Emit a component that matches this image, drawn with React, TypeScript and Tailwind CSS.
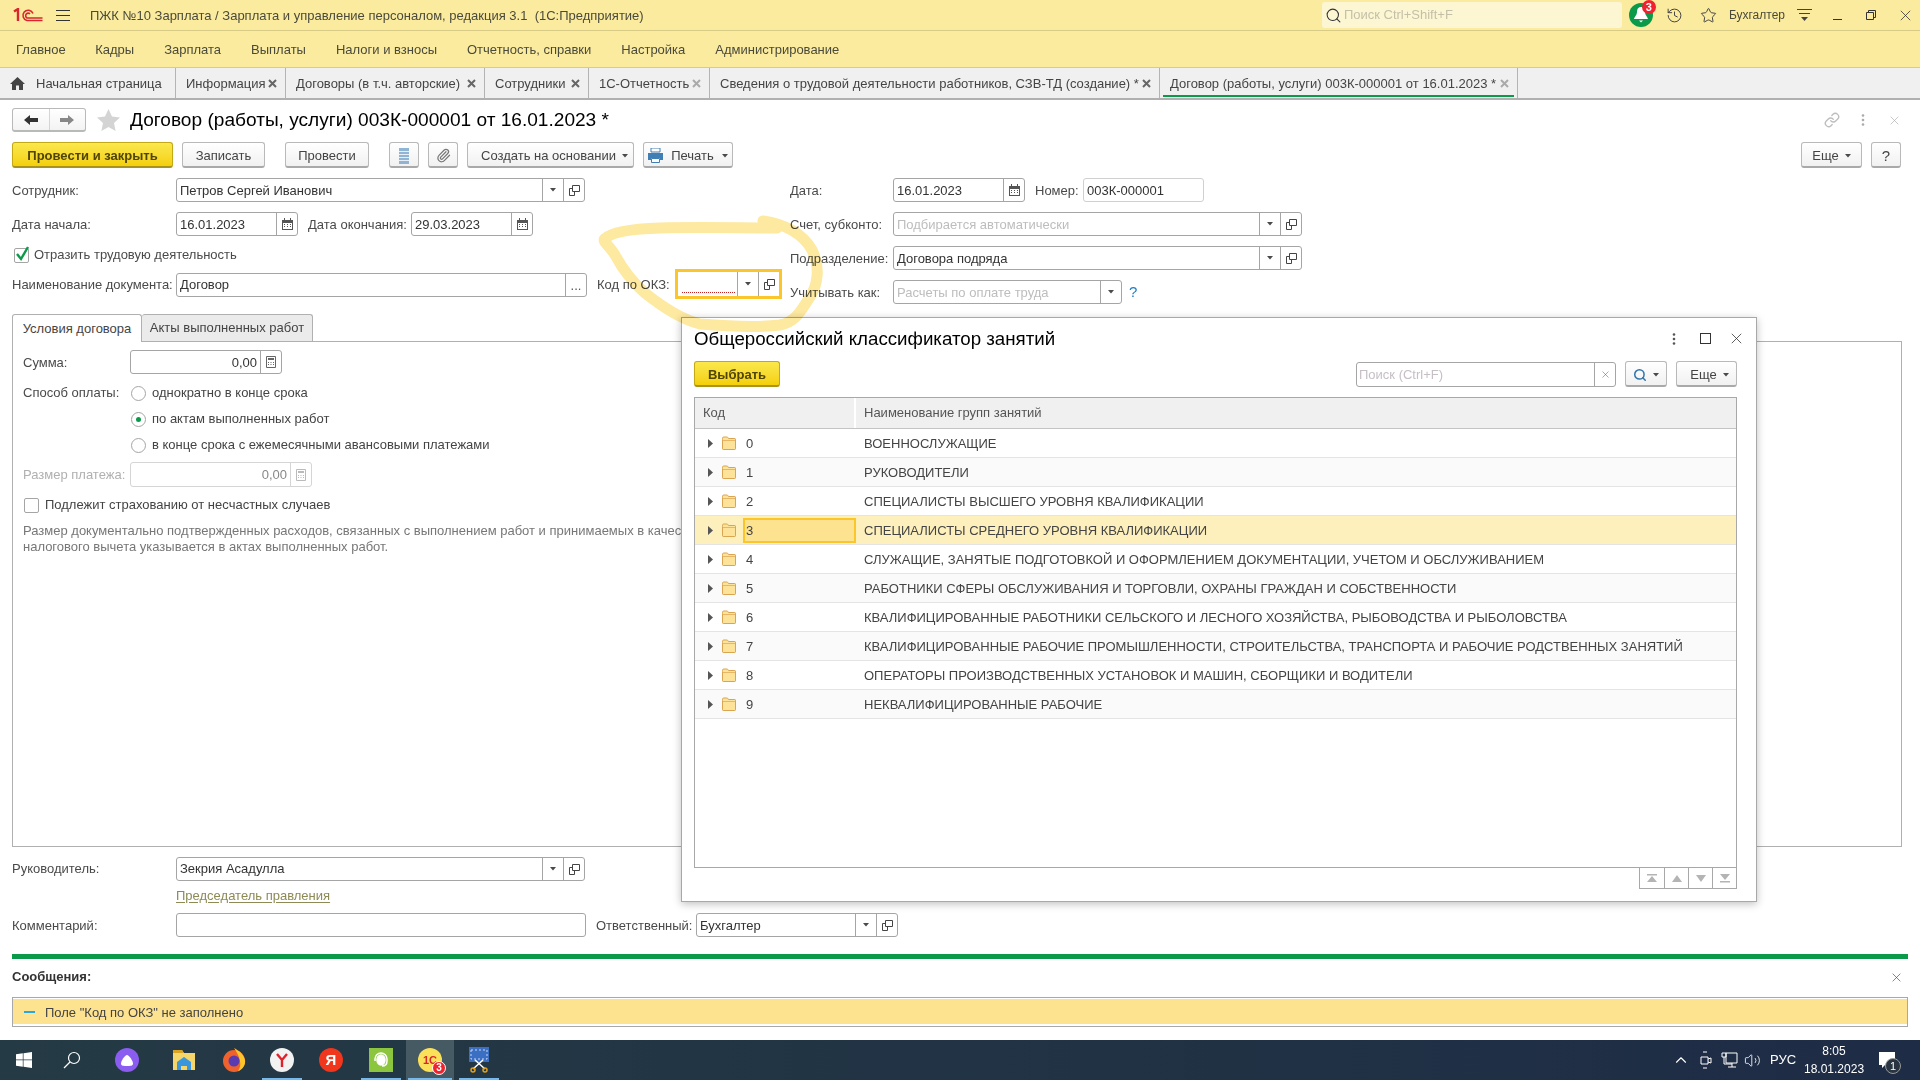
import React from "react";
import { ChevronUp, History, Link as LinkIcon, Paperclip, Search, Star, Volume2 } from "lucide-react";

const Tri = ({ c = "#4a4a4a" }: { c?: string }) => (
  <svg width="6" height="4" viewBox="0 0 6 4" className="shrink-0"><path d="M0 0h6L3 3.500z" fill={c} /></svg>
);
const OpenIco = () => (
  <svg width="11" height="11" viewBox="0 0 11 11" fill="none" stroke="#444" strokeWidth="1"><path d="M3.5 .5h7v6h-7z" /><path d="M3.5 3.5h-3v7h5v-4" /></svg>
);
const CalIco = ({ c = "#555" }: { c?: string }) => (
  <svg width="11" height="12" viewBox="0 0 11 12"><path d="M0 2h11v10H0z" fill={c} /><path d="M1 5h9v6H1z" fill="#fff" /><path d="M2 0h1v3H2zM8 0h1v3H8zM2 6h1v1H2zM5 6h1v1H5zM8 6h1v1H8zM2 8h1v1H2zM5 8h1v1H5zM8 8h1v1H8z" fill={c} /></svg>
);
const CalcIco = ({ c = "#666" }: { c?: string }) => (
  <svg width="10" height="12" viewBox="0 0 10 12"><path d="M.5 .5h9v11h-9z" fill="#fff" stroke={c} /><path d="M2 2h6v2H2zM2 6h1v1H2zM4.500 6h1v1h-1zM7 6h1v1H7zM2 8h1v1H2zM4.500 8h1v1h-1zM7 8h1v1H7z" fill={c} /></svg>
);
const TabX = ({ c = "#666" }: { c?: string }) => (
  <svg width="9" height="9" viewBox="0 0 9 9" stroke={c} strokeWidth="2" className="shrink-0"><path d="M1 1l7 7M8 1L1 8" /></svg>
);
const ThinX = ({ s = 14, c = "#444" }: { s?: number; c?: string }) => (
  <svg width={s} height={s} viewBox="0 0 14 14" stroke={c} strokeWidth="1" fill="none"><path d="M1 1l12 12M13 1L1 13" /></svg>
);

function Seg({ children, w = 21 }: { children: React.ReactNode; w?: number }) {
  return (
    <div style={{ width: w }} className="h-full border-l border-[#a5a5a5] flex items-center justify-center shrink-0">{children}</div>
  );
}

function Field({ w, text, ph, right, arrow, open, cal, calc, dots, dim, raised }: { w: number; text?: string; ph?: string; right?: boolean; arrow?: boolean; open?: boolean; cal?: boolean; calc?: boolean; dots?: boolean; dim?: boolean; raised?: boolean }) {
  return (
    <div style={{ width: w }} className={`h-6 flex items-center rounded-[3px] border bg-white shrink-0 ${dim ? "border-[#d0d0d0]" : "border-[#a5a5a5]"}`}>
      <div className={`flex-1 min-w-0 px-[3px] whitespace-nowrap overflow-hidden ${raised ? "" : "pt-px"} ${right ? "text-right" : ""} ${ph ? "text-[#bdbdbd]" : "text-[#333]"}`}>{text ?? ph}</div>
      {arrow && <Seg><Tri /></Seg>}
      {open && <Seg><OpenIco /></Seg>}
      {cal && <Seg><CalIco /></Seg>}
      {calc && <Seg><CalcIco /></Seg>}
      {dots && <Seg><span className="text-[#555] leading-none">...</span></Seg>}
    </div>
  );
}

function Btn({ w, children, cls = "" }: { w: number; children: React.ReactNode; cls?: string }) {
  return (
    <div style={{ width: w }} className={`h-[26px] shrink-0 flex items-center justify-center gap-[6px] rounded-[3px] border border-[#b9b9b9] border-b-2 border-b-[#a9a9a9] bg-linear-to-b from-white to-[#f1f1f1] text-[#444] pt-[2px] ${cls}`}>{children}</div>
  );
}
function YBtn({ w, children }: { w: number; children: React.ReactNode }) {
  return (
    <div style={{ width: w }} className="h-[26px] shrink-0 flex items-center justify-center rounded-[3px] border border-[#c4a917] border-b-2 border-b-[#a89320] bg-linear-to-b from-[#fbe84a] to-[#f4d000] text-[#4f4500] font-bold pt-[2px]">{children}</div>
  );
}

function Tab({ w, label, x, active, xc }: { w: number; label: string; x?: boolean; active?: boolean; xc?: string }) {
  return (
    <div style={{ width: w }} className="relative h-full shrink-0 flex items-center justify-between pl-[10px] pr-[8px] border-r border-[#b4b4b4] text-[#444] whitespace-nowrap">
      <span className="pt-px">{label}</span>
      {x && <TabX c={xc} />}
      {active && <div className="absolute left-[3px] right-[3px] bottom-[1px] h-[2px] bg-[#0a9a49]" />}
    </div>
  );
}

const Label = ({ w, children, cls = "" }: { w: number; children: React.ReactNode; cls?: string }) => (
  <div style={{ width: w }} className={`shrink-0 text-[#4a4a4a] whitespace-nowrap pt-px ${cls}`}>{children}</div>
);

const Radio = ({ on }: { on?: boolean }) => (
  <div className="w-[15px] h-[15px] rounded-full border border-[#a5a5a5] bg-white flex items-center justify-center shrink-0">
    {on && <div className="w-[5px] h-[5px] rounded-full bg-[#0a9a49]" />}
  </div>
);

const Folder = () => (
  <svg width="14" height="14" viewBox="0 0 14 14"><path d="M.5 3.5V2.2C.5 1.5 1 1 1.7 1h3.2c.5 0 .9.3 1.1.7l.4.8h6.4c.4 0 .7.3.7.7v9.6c0 .4-.3.7-.7.7H1.2c-.4 0-.7-.3-.7-.7z" fill="#fde29a" stroke="#d9a550" /><path d="M1 4.5h12" stroke="#e6b766" /></svg>
);

const rows: [string, string][] = [
  ["0", "ВОЕННОСЛУЖАЩИЕ"],
  ["1", "РУКОВОДИТЕЛИ"],
  ["2", "СПЕЦИАЛИСТЫ ВЫСШЕГО УРОВНЯ КВАЛИФИКАЦИИ"],
  ["3", "СПЕЦИАЛИСТЫ СРЕДНЕГО УРОВНЯ КВАЛИФИКАЦИИ"],
  ["4", "СЛУЖАЩИЕ, ЗАНЯТЫЕ ПОДГОТОВКОЙ И ОФОРМЛЕНИЕМ ДОКУМЕНТАЦИИ, УЧЕТОМ И ОБСЛУЖИВАНИЕМ"],
  ["5", "РАБОТНИКИ СФЕРЫ ОБСЛУЖИВАНИЯ И ТОРГОВЛИ, ОХРАНЫ ГРАЖДАН И СОБСТВЕННОСТИ"],
  ["6", "КВАЛИФИЦИРОВАННЫЕ РАБОТНИКИ СЕЛЬСКОГО И ЛЕСНОГО ХОЗЯЙСТВА, РЫБОВОДСТВА И РЫБОЛОВСТВА"],
  ["7", "КВАЛИФИЦИРОВАННЫЕ РАБОЧИЕ ПРОМЫШЛЕННОСТИ, СТРОИТЕЛЬСТВА, ТРАНСПОРТА И РАБОЧИЕ РОДСТВЕННЫХ ЗАНЯТИЙ"],
  ["8", "ОПЕРАТОРЫ ПРОИЗВОДСТВЕННЫХ УСТАНОВОК И МАШИН, СБОРЩИКИ И ВОДИТЕЛИ"],
  ["9", "НЕКВАЛИФИЦИРОВАННЫЕ РАБОЧИЕ"],
];

function TB({ w, line, lineW = 40, hl, children }: { w: number; line?: boolean; lineW?: number; hl?: boolean; children: React.ReactNode }) {
  return (
    <div style={{ width: w }} className={`relative h-full shrink-0 flex items-center justify-center ${hl ? "bg-[#465a63]" : ""}`}>
      {children}
      {line && <div style={{ width: lineW }} className="absolute bottom-0 left-1/2 -translate-x-1/2 h-[2px] bg-[#76b9ed]" />}
    </div>
  );
}

function Dialog() {
  return (
    <div className="absolute left-[681px] top-[317px] w-[1076px] h-[585px] border border-[#a8a8a8] bg-white shadow-[0_2px_8px_rgba(0,0,0,0.25)] pl-[12px] pr-[19px]">
      <div className="h-[43px] pb-[2px] flex items-center justify-between">
        <div className="text-[18.7px] text-black whitespace-nowrap">Общероссийский классификатор занятий</div>
        <div className="flex items-center mr-[-5px]">
          <svg width="4" height="12" viewBox="0 0 4 12" fill="#555"><circle cx="2" cy="1.5" r="1.3" /><circle cx="2" cy="6" r="1.3" /><circle cx="2" cy="10.5" r="1.3" /></svg>
          <div className="ml-[24px] w-[9px] h-[9px] box-content border border-[#333]" />
          <div className="ml-[20px]"><ThinX s={11} c="#333" /></div>
        </div>
      </div>
      <div className="h-[26px] flex items-center">
        <YBtn w={86}>Выбрать</YBtn>
        <div className="flex-1" />
        <div className="w-[260px] h-[25px] flex items-center rounded-[3px] border border-[#a5a5a5] bg-white">
          <div className="flex-1 px-[2px] pt-px text-[#c6bfc6]">Поиск (Ctrl+F)</div>
          <Seg><ThinX s={7} c="#555" /></Seg>
        </div>
        <Btn w={42} cls="ml-[9px]"><Search size={14} color="#2f75ad" strokeWidth={2.6} /><Tri /></Btn>
        <Btn w={61} cls="ml-[9px]"><span className="ml-[6px]">Еще</span><Tri /></Btn>
      </div>
      <div className="mt-[10px] h-[471px] border border-[#a8a8a8]">
        <div className="h-[31px] flex bg-[#f0f0f0] border-b border-[#c4c4c4] text-[#555]">
          <div className="w-[161px] h-full flex items-center pl-[8px] border-r-2 border-white">Код</div>
          <div className="flex-1 flex items-center pl-[8px]">Наименование групп занятий</div>
        </div>
        {rows.map(([c, t], i) => {
          const sel = i === 3;
          return (
            <div key={c} className={`h-[29px] flex items-center border-b border-[#e4e4e4] text-[#444] ${sel ? "bg-[#fdf0bd]" : i % 2 ? "bg-[#fafafa]" : "bg-white"}`}>
              <div className="w-[48px] h-full flex items-center pl-[13px] shrink-0">
                <svg width="5" height="9" viewBox="0 0 5 9"><path d="M0 0l5 4.5L0 9z" fill="#555" /></svg>
                <div className="ml-[9px] flex"><Folder /></div>
              </div>
              <div className={`w-[113px] h-[25px] shrink-0 flex items-center pl-[1px] pt-px border-2 ${sel ? "border-[#fbc52c] bg-[#fde28f]" : "border-transparent"}`}>{c}</div>
              <div className="pl-[8px] pt-px whitespace-nowrap">{t}</div>
            </div>
          );
        })}
      </div>
      <div className="flex justify-end -mt-px">
        <div className="flex border border-[#a8a8a8] h-[22px]">
          {["M1 1h10v1.5H1zM6 3l5 6H1z", "M6 2l5 7H1z", "M1 2h10L6 9z", "M1 1h10L6 7zM1 8h10v1.5H1z"].map((d, i) => (
            <div key={i} className={`w-[24px] flex items-center justify-center ${i ? "border-l border-[#a8a8a8]" : ""}`}>
              <svg width="12" height="10" viewBox="0 0 12 10"><path d={d} fill="#b4b4b4" /></svg>
            </div>
          ))}
        </div>
      </div>
    </div>
  );
}

export default function App() {
  return (
    <div className="relative w-[1920px] h-[1080px] overflow-hidden bg-white flex flex-col text-[13px] leading-4 text-[#333] [font-family:'Liberation_Sans',Arial,sans-serif]">
      {/* Title bar */}
      <div className="h-[31px] shrink-0 bg-[#fbeb9f] border-b border-[#d8cb85] flex items-center text-[#4a4a3a]">
        <svg width="30" height="14" viewBox="0 0 30 14" className="ml-[13px] shrink-0" fill="none" stroke="#d8262c">
          <path d="M1 3.5L5 1v12" strokeWidth="2.4" />
          <path d="M20 5.5A5.2 5.2 0 1 0 14 12.5H29.5" strokeWidth="1.6" />
          <path d="M17 5.8A2.6 2.6 0 1 0 14 10H29.5" strokeWidth="1.6" />
        </svg>
        <div className="ml-[13px] w-[14px] h-[11px] border-y border-[#333] relative shrink-0"><div className="absolute left-0 right-0 top-[4px] h-px bg-[#333]" /></div>
        <div className="ml-[20px] pt-px whitespace-nowrap">ПЖК №10 Зарплата / Зарплата и управление персоналом, редакция 3.1&nbsp; (1С:Предприятие)</div>
        <div className="flex-1" />
        <div className="w-[300px] h-[26px] rounded-[3px] bg-[#fdf6d3] flex items-center pl-[3px] text-[#c4c0a8]">
          <Search size={17} color="#333" strokeWidth={1.5} />
          <span className="ml-[2px]">Поиск Ctrl+Shift+F</span>
        </div>
        <div className="relative ml-[7px] w-[24px] h-[24px] rounded-full bg-[#0a9a49] flex items-center justify-center">
          <svg width="14" height="16" viewBox="0 0 14 16" fill="#fff"><path d="M7 0c3 0 4 2.5 4 5 0 3 3 5.5 3 7H0c0-1.500 3-4 3-7 0-2.500 1-5 4-5zM5 13.500h4L7 15.500z" /></svg>
          <div className="absolute -top-[3px] -right-[3px] w-[14px] h-[14px] rounded-full bg-[#f0222e] text-white text-[11px] font-bold flex items-center justify-center">3</div>
        </div>
        <History size={17} color="#444" strokeWidth={1.4} className="ml-[13px]" />
        <Star size={17} color="#444" strokeWidth={1.4} className="ml-[17px]" />
        <div className="ml-[12px] text-[12px]">Бухгалтер</div>
        <svg width="15" height="14" viewBox="0 0 15 14" className="ml-[12px]"><path d="M0 1h15v1H0zM2 5h11v1H2z" fill="#444" /><path d="M4 9h7l-3.500 4z" fill="#444" /></svg>
        <div className="ml-[21px] w-[9px] h-px bg-[#333] mt-[8px]" />
        <svg width="10" height="10" viewBox="0 0 10 10" fill="none" stroke="#333" className="ml-[24px]"><path d="M.5 2.500h7v7h-7zM2.500 2.500v-2h7v7h-2" /></svg>
        <div className="ml-[24px] mr-[9px]"><ThinX s={11} c="#333" /></div>
      </div>
      {/* Menu */}
      <div className="h-[37px] shrink-0 bg-[#fbeb9f] border-b border-[#c8c8c8] flex items-center text-[#4a4a3a] pt-[2px]">
        {["Главное", "Кадры", "Зарплата", "Выплаты", "Налоги и взносы", "Отчетность, справки", "Настройка", "Администрирование"].map((m) => (
          <div key={m} className="px-[15px] first:pl-[16px] first:pr-[14.5px] whitespace-nowrap">{m}</div>
        ))}
      </div>
      {/* Tabs */}
      <div className="h-[32px] shrink-0 bg-[#f0f0f0] border-b-2 border-[#b0b0b0] flex items-center">
        <div className="w-[176px] h-full shrink-0 flex items-center pl-[10px] border-r border-[#b4b4b4] text-[#444]">
          <svg width="15" height="13" viewBox="0 0 15 13" fill="#444"><path d="M7.500 0L15 7h-2v6H9V8.500H6V13H2V7H0z" /></svg>
          <span className="ml-[11px] pt-px whitespace-nowrap">Начальная страница</span>
        </div>
        <Tab w={110} label="Информация" x />
        <Tab w={199} label="Договоры (в т.ч. авторские)" x />
        <Tab w={104} label="Сотрудники" x />
        <Tab w={121} label="1С-Отчетность" x xc="#aaa" />
        <Tab w={450} label="Сведения о трудовой деятельности работников, СЗВ-ТД (создание) *" x />
        <Tab w={358} label="Договор (работы, услуги) 003К-000001 от 16.01.2023 *" x active xc="#aaa" />
      </div>
      {/* Header */}
      <div className="mt-[8px] h-6 shrink-0 flex items-center pl-[12px] pr-[21px]">
        <div className="w-[74px] h-6 flex rounded-[3px] border border-[#b9b9b9] border-b-2 bg-linear-to-b from-white to-[#f3f3f3]">
          <div className="flex-1 flex items-center justify-center border-r border-[#d5d5d5]">
            <svg width="14" height="10" viewBox="0 0 14 10" fill="#333"><path d="M0 5l6-5v3h8v4H6v3z" /></svg>
          </div>
          <div className="flex-1 flex items-center justify-center">
            <svg width="14" height="10" viewBox="0 0 14 10" fill="#888"><path d="M14 5L8 0v3H0v4h8v3z" /></svg>
          </div>
        </div>
        <svg width="23" height="22" viewBox="0 0 23 22" className="ml-[11px]"><path d="M11.500 0l3.500 7.500 8 1-6 5.500 1.600 8-7.100-4-7.100 4L6 14 0 8.500l8-1z" fill="#d4d4d4" /></svg>
        <div className="ml-[10px] text-[19.1px] text-black whitespace-nowrap">Договор (работы, услуги) 003К-000001 от 16.01.2023 *</div>
        <div className="flex-1" />
        <LinkIcon size={16} color="#bdbdbd" />
        <svg width="4" height="12" viewBox="0 0 4 12" fill="#aaa" className="ml-[21px]"><circle cx="2" cy="1.500" r="1.300" /><circle cx="2" cy="6" r="1.300" /><circle cx="2" cy="10.500" r="1.300" /></svg>
        <div className="ml-[25px]"><ThinX s={9} c="#aaa" /></div>
      </div>
      {/* Toolbar */}
      <div className="mt-[10px] h-[26px] shrink-0 flex items-center pl-[12px] pr-[19px]">
        <YBtn w={161}>Провести и закрыть</YBtn>
        <Btn w={83} cls="ml-[9px]">Записать</Btn>
        <Btn w={84} cls="ml-[20px]">Провести</Btn>
        <Btn w={30} cls="ml-[20px]">
          <svg width="10" height="16" viewBox="0 0 10 16"><path d="M0 0h10v16H0z" fill="#8fb4d4" /><path d="M0 3h10v1H0zM0 6h10v1H0zM0 9h10v1H0zM0 12h10v1H0z" fill="#e8eef4" /></svg>
        </Btn>
        <Btn w={30} cls="ml-[9px]"><Paperclip size={15} color="#777" /></Btn>
        <Btn w={167} cls="ml-[9px] pl-[8px]">Создать на основании<Tri /></Btn>
        <Btn w={90} cls="ml-[9px] gap-[8px]">
          <svg width="15" height="15" viewBox="0 0 15 15"><path d="M3 0h9v4H3z" fill="#fff" stroke="#3f7fb5" /><path d="M0 5h15v7h-3v-2H3v2H0z" fill="#3f7fb5" /><path d="M3.500 10.500h8v4h-8z" fill="#fff" stroke="#3f7fb5" /></svg>
          Печать<Tri />
        </Btn>
        <div className="flex-1" />
        <Btn w={61}><span>Еще</span><Tri /></Btn>
        <Btn w={30} cls="ml-[9px] text-[15px] text-[#333]">?</Btn>
      </div>
      {/* Form */}
      <div className="mt-[10px] shrink-0 flex pl-[12px]">
        <div className="w-[778px] shrink-0 flex flex-col">
          <div className="h-6 flex items-center">
            <Label w={164}>Сотрудник:</Label>
            <Field w={409} text="Петров Сергей Иванович" arrow open />
          </div>
          <div className="mt-[10px] h-6 flex items-center">
            <Label w={164}>Дата начала:</Label>
            <Field w={122} text="16.01.2023" cal />
            <Label w={103} cls="ml-[10px]">Дата окончания:</Label>
            <Field w={122} text="29.03.2023" cal />
          </div>
          <div className="mt-[11px] h-4 flex items-center">
            <div className="relative w-[15px] h-[15px] ml-[2px] rounded-[2px] border border-[#a5a5a5] bg-white">
              <svg width="16" height="16" viewBox="0 0 16 16" fill="none" stroke="#0a9a49" strokeWidth="2.400" className="absolute -top-[3px] left-0"><path d="M2 8l4 5L13 1" /></svg>
            </div>
            <span className="ml-[5px] text-[#4a4a4a]">Отразить трудовую деятельность</span>
          </div>
          <div className="mt-[10px] h-6 flex items-center">
            <Label w={164} cls="!pt-0">Наименование документа:</Label>
            <Field w={411} text="Договор" dots raised />
            <Label w={78} cls="ml-[10px] !pt-0">Код по ОКЗ:</Label>
            <div className="w-[107px] h-[30px] -my-[3px] shrink-0 border-[3px] border-[#fbc52c] bg-white flex items-center -translate-y-px">
              <div className="flex-1 h-full relative"><div className="absolute left-[4px] right-[2px] bottom-[3px] border-b border-dotted border-[#c42020]" /></div>
              <div className="w-[21px] h-full flex items-center justify-center border-l border-[#a5a5a5] shrink-0"><Tri /></div>
              <div className="w-[21px] h-full flex items-center justify-center border-l border-[#a5a5a5] shrink-0"><OpenIco /></div>
            </div>
          </div>
        </div>
        <div className="ml-0 flex flex-col">
          <div className="h-6 flex items-center">
            <Label w={103}>Дата:</Label>
            <Field w={132} text="16.01.2023" cal />
            <Label w={48} cls="ml-[10px]">Номер:</Label>
            <Field w={121} text="003К-000001" dim />
          </div>
          <div className="mt-[10px] h-6 flex items-center">
            <Label w={103}>Счет, субконто:</Label>
            <Field w={409} ph="Подбирается автоматически" arrow open />
          </div>
          <div className="mt-[10px] h-6 flex items-center">
            <Label w={103}>Подразделение:</Label>
            <Field w={409} text="Договора подряда" arrow open />
          </div>
          <div className="mt-[10px] h-6 flex items-center">
            <Label w={103}>Учитывать как:</Label>
            <Field w={229} ph="Расчеты по оплате труда" arrow />
            <span className="ml-[7px] text-[15px] text-[#1f7fc4]">?</span>
          </div>
        </div>
      </div>
      {/* Panel tabs */}
      <div className="mt-[10px] h-[27px] shrink-0 flex pl-[12px]">
        <div className="w-[130px] h-[28px] flex items-center justify-center rounded-t-[3px] border border-b-0 border-[#b0b0b0] bg-white text-[#444] z-10">Условия договора</div>
        <div className="w-[171px] h-[27px] flex items-center justify-center rounded-t-[3px] border border-l-0 border-b-0 border-[#b0b0b0] bg-[#ebebeb] text-[#444]">Акты выполненных работ</div>
      </div>
      <div className="ml-[12px] w-[1890px] h-[506px] shrink-0 border border-[#b0b0b0] overflow-hidden pl-[10px]">
        <div className="mt-[8px] h-6 flex items-center">
          <Label w={107}>Сумма:</Label>
          <Field w={152} text="0,00" right calc />
        </div>
        <div className="mt-[6px] flex h-[26px] items-center">
          <Label w={108} cls="!pt-0">Способ оплаты:</Label><Radio /><span className="ml-[6px] text-[#444]">однократно в конце срока</span>
        </div>
        <div className="flex h-[26px] items-center pl-[108px]"><Radio on /><span className="ml-[6px] text-[#444]">по актам выполненных работ</span></div>
        <div className="flex h-[26px] items-center pl-[108px]"><Radio /><span className="ml-[6px] text-[#444]">в конце срока с ежемесячными авансовыми платежами</span></div>
        <div className="mt-[4px] h-[25px] flex items-center">
          <Label w={107} cls="!text-[#b0b0b0] !pt-0">Размер платежа:</Label>
          <div className="w-[182px] h-[25px] flex items-center rounded-[3px] border border-[#d5d5d5] text-[#888]">
            <div className="flex-1 text-right pr-[3px]">0,00</div>
            <div className="w-[21px] h-full border-l border-[#d5d5d5] flex items-center justify-center"><CalcIco c="#bbb" /></div>
          </div>
        </div>
        <div className="mt-[10px] h-4 flex items-center">
          <div className="ml-[1px] w-[15px] h-[15px] rounded-[2px] border border-[#a5a5a5]" />
          <span className="ml-[6px] text-[#444]">Подлежит страхованию от несчастных случаев</span>
        </div>
        <div className="mt-[10px] text-[#777] whitespace-nowrap">
          <div>Размер документально подтвержденных расходов, связанных с выполнением работ и принимаемых в качестве</div>
          <div>налогового вычета указывается в актах выполненных работ.</div>
        </div>
      </div>
      {/* Bottom fields */}
      <div className="mt-[10px] h-6 shrink-0 flex items-center pl-[12px]">
        <Label w={164} cls="!pt-0">Руководитель:</Label>
        <Field w={409} text="Зекрия Асадулла" arrow open raised />
      </div>
      <div className="mt-[7px] h-4 shrink-0 pl-[176px]">
        <span className="text-[#8d8a55] underline underline-offset-2">Председатель правления</span>
      </div>
      <div className="mt-[9px] h-6 shrink-0 flex items-center pl-[12px]">
        <Label w={164}>Комментарий:</Label>
        <Field w={410} text="" />
        <Label w={100} cls="ml-[10px]">Ответственный:</Label>
        <Field w={202} text="Бухгалтер" arrow open />
      </div>
      <div className="mt-[17px] ml-[12px] w-[1896px] h-[5px] shrink-0 bg-[#0a9a49]" />
      <div className="mt-[10px] h-4 shrink-0 flex items-center justify-between pl-[12px] pr-[19px]">
        <span className="font-bold text-[#333]">Сообщения:</span>
        <ThinX s={9} c="#444" />
      </div>
      <div className="mt-[12px] ml-[12px] w-[1896px] h-[30px] shrink-0 border border-[#a8a8a8] pt-[1px] pb-[2px] bg-white">
        <div className="h-full bg-[#fde28f] flex items-center pl-[11px] text-[#444]">
          <div className="w-[11px] h-[2px] bg-[#2aa7dc]" />
          <span className="ml-[10px] pt-[2px]">Поле "Код по ОКЗ" не заполнено</span>
        </div>
      </div>
      {/* Taskbar */}
      <div className="mt-auto h-[40px] shrink-0 flex items-center bg-linear-to-r from-[#243a44] to-[#1e2c45] text-white">
        <TB w={48}>
          <svg width="16" height="16" viewBox="0 0 16 16" fill="#fff"><path d="M0 2.300L6.800 1.300V7.500H0zM7.500 1.200L16 0V7.500H7.500zM0 8.200H6.800V14.700L0 13.700zM7.500 8.200H16V16L7.500 14.800z" /></svg>
        </TB>
        <TB w={48}>
          <svg width="18" height="18" viewBox="0 0 18 18" fill="none" stroke="#fff" strokeWidth="1.200"><circle cx="11" cy="7" r="5.500" /><path d="M7 11l-6 6" /></svg>
        </TB>
        <TB w={62}>
          <div className="w-[24px] h-[24px] rounded-full bg-[#8a5cf0] flex items-center justify-center">
            <svg width="12" height="11" viewBox="0 0 12 11" fill="#fff"><path d="M6 0c2 0 6 6 6 8.500S9 11 6 11 0 11 0 8.500 4 0 6 0z" /></svg>
          </div>
        </TB>
        <TB w={52}>
          <svg width="22" height="20" viewBox="0 0 22 20"><path d="M0 0h9l2 3h11v17H0z" fill="#f4d66b" /><path d="M0 0h9l2 3H0z" fill="#d9a520" /><path d="M4 12l7-5 7 5v8h-4v-4H8v4H4z" fill="#3a96dd" /></svg>
        </TB>
        <TB w={48}>
          <svg width="24" height="24" viewBox="0 0 24 24"><circle cx="12" cy="13" r="11" fill="#f0622d" /><path d="M12 0c5 3 9 5 11 12 1 5-3 10-7 11 5-6 1-16-4-23z" fill="#ffc629" /><circle cx="12" cy="13" r="5.500" fill="#5a3bb0" /></svg>
        </TB>
        <TB w={48} line>
          <div className="relative w-[24px] h-[24px] rounded-full bg-[#f2f2f2] flex items-center justify-center">
            <svg width="12" height="14" viewBox="0 0 12 14" fill="none" stroke="#e0202a" strokeWidth="2.400"><path d="M1 1l5 6 5-6M6 7v7" /></svg>
          </div>
        </TB>
        <TB w={50}>
          <div className="w-[24px] h-[24px] rounded-full bg-[#f0361c] flex items-center justify-center text-white font-bold text-[15px]">Я</div>
        </TB>
        <TB w={50} line>
          <div className="w-[24px] h-[24px] bg-[#8cc63f] flex items-center justify-center">
            <svg width="18" height="18" viewBox="0 0 18 18" fill="none" stroke="#fff" strokeWidth="1.500"><path d="M3 10V8a6 6 0 0 1 12 0v2" /><ellipse cx="9" cy="9" rx="4" ry="5" fill="#fff" /><path d="M15 10c0 4-3 5-5 5" /></svg>
          </div>
        </TB>
        <TB w={48} line lineW={44} hl>
          <div className="relative w-[24px] h-[24px] rounded-full bg-[#fbe05a] flex items-center justify-center text-[#d8262c] font-bold text-[11px]">
            1С
            <div className="absolute -right-[4px] -bottom-[3px] w-[14px] h-[14px] rounded-full bg-[#f0222e] border border-white text-white text-[10px] flex items-center justify-center">3</div>
          </div>
        </TB>
        <TB w={50} line>
          <svg width="24" height="26" viewBox="0 0 24 26"><path d="M2 0h20v15H2z" fill="#3a6fc4" /><path d="M4 3h16v9H4z" fill="none" stroke="#c8d8f0" strokeDasharray="2 2" /><path d="M8 13l10 9M16 13L6 22" stroke="#fff" strokeWidth="1.500" /><circle cx="6" cy="23" r="2" fill="none" stroke="#e0a020" strokeWidth="1.500" /><circle cx="18" cy="23" r="2" fill="none" stroke="#e0a020" strokeWidth="1.500" /></svg>
        </TB>
        <div className="flex-1" />
        <ChevronUp size={18} color="#fff" strokeWidth={1.500} />
        <svg width="12" height="18" viewBox="0 0 12 18" fill="none" stroke="#fff" className="ml-[10px]"><path d="M1 6h7v7H1zM8 8l3-1v5l-3-1M3 1h4M3 17h4" /></svg>
        <svg width="17" height="16" viewBox="0 0 17 16" fill="none" stroke="#fff" className="ml-[9px]"><path d="M5 1h11v10H5zM1 1h4v4H1zM3 5v7h8M11 11v4M7 15h8" /></svg>
        <Volume2 size={17} color="#fff" strokeWidth={1.200} className="ml-[6px]" />
        <div className="ml-[9px] w-[24px] text-[13px]">РУС</div>
        <div className="ml-[10px] w-[60px] text-center text-[12px] leading-[18px]">
          <div>8:05</div>
          <div>18.01.2023</div>
        </div>
        <div className="relative ml-[15px] mr-[25px] w-[16px] h-[16px]">
          <svg width="16" height="17" viewBox="0 0 16 17" fill="#fff"><path d="M0 0h16v13H6l-3 3v-3H0z" /></svg>
          <div className="absolute -right-[6px] -bottom-[6px] w-[16px] h-[16px] rounded-full bg-[#2a3542] border border-[#999] text-[11px] flex items-center justify-center">1</div>
        </div>
      </div>
      <Dialog />
      <svg className="absolute left-0 top-0 pointer-events-none mix-blend-multiply" width="1920" height="1080" fill="none">
        <path d="M763 221 C 785 224 803 234 812 250 C 820 266 819 285 808 300 C 800 312 795 322 780 325 C 755 328 725 326 700 324 C 680 319 660 305 645 293 C 630 280 622 268 615 255 C 610 246 600 240 606 238 C 612 232 630 229 660 228 C 700 227 740 228 777 228 L 763 226" stroke="#fde9a0" strokeWidth="11" strokeLinecap="round" strokeLinejoin="round" />
      </svg>
    </div>
  );
}
